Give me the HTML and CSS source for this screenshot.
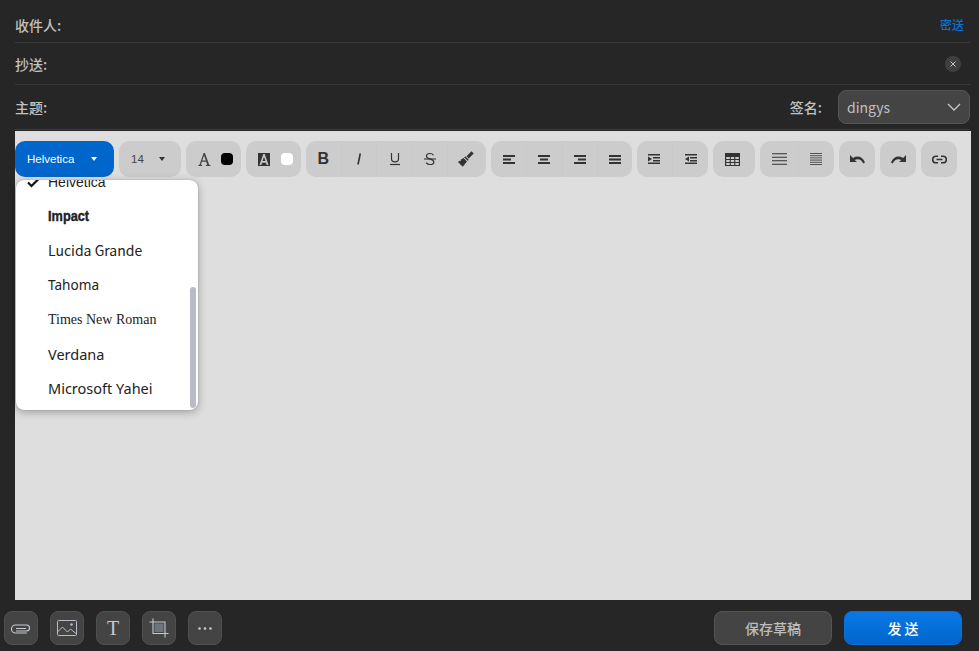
FILE: index.html
```html
<!DOCTYPE html>
<html lang="zh-CN">
<head>
<meta charset="utf-8">
<title>写邮件</title>
<link rel="stylesheet" href="styles.css">
</head>
<body>
<div class="app">
  <header class="fields">
    <div class="row r1"><span class="label">收件人:</span><a class="bcc">密送</a></div>
    <div class="row r2"><span class="label">抄送:</span>
      <span class="clear"><svg width="8" height="8" viewBox="0 0 8 8"><path d="M1.500 1.500l5 5M6.500 1.500l-5 5" stroke="#c4c4c4" stroke-width="1" fill="none"/></svg></span></div>
    <div class="row r3"><span class="label">主题:</span>
      <span class="sign"><span class="label">签名:</span>
        <span class="select">dingys<svg width="14" height="8" viewBox="0 0 14 8"><path d="M1 1l6 6 6-6" stroke="#c8c8c8" stroke-width="1.300" fill="none"/></svg></span></span></div>
  </header>

  <main class="editor">
    <div class="toolbar">
      <div class="group font active"><span class="fname">Helvetica</span><i class="caret"></i></div>
      <div class="group size"><span class="fsize">14</span><i class="caret"></i></div>
      <div class="group color">
        <svg class="a-icon" width="13" height="13" viewBox="0 0 13 13"><path fill="#444" fill-rule="evenodd" d="M5.600 0h1.300l4.300 11.800 1.300.4v.8H7.800v-.8l1.400-.4-1-3H3.900l-1 3 1.400.4v.8H.3v-.8l1.200-.4zM6 2.500L4.300 7.600h3.500z"/></svg><i class="swatch black"></i></div>
      <div class="group color">
        <svg class="a-icon" width="12" height="13" viewBox="0 0 12 13"><path fill="#333" d="M0 0h12v13H0z"/><path fill="#c9c9c9" d="M5.300 1h1.400l3.800 11H8.700L8 9.700H4l-.7 2.300H1.500zM6 3.800L4.600 8h2.800z" fill-rule="evenodd"/></svg><i class="swatch white"></i></div>
      <div class="group five">
        <span class="btn"><b class="t-b">B</b></span>
        <span class="btn"><svg width="14" height="14" viewBox="0 0 14 14"><path d="M8.300 1.500L6 12.500" stroke="#333" stroke-width="1.600"/></svg></span>
        <span class="btn"><svg width="14" height="14" viewBox="0 0 14 14"><path d="M3.500 1v5.700c0 2 1.400 3.100 3.500 3.100s3.500-1.100 3.500-3.100V1" stroke="#333" stroke-width="1.200" fill="none"/><path d="M2 12.500h10" stroke="#333" stroke-width="1.200"/></svg></span>
        <span class="btn"><svg width="14" height="14" viewBox="0 0 14 14"><path d="M10.500 3.200C9.800 2 8.500 1.500 7 1.500c-2 0-3.500 1-3.500 2.700 0 3.800 7.300 1.900 7.300 5.700 0 1.700-1.600 2.600-3.800 2.600-1.700 0-3-.6-3.700-1.900" stroke="#333" stroke-width="1.200" fill="none"/><path d="M1 7h12" stroke="#333" stroke-width="1.100"/></svg></span>
        <span class="btn"><svg width="16" height="16" viewBox="0 0 16 16"><path d="M13.500.3l2.200 2.200-5 5-2.200-2.200z" fill="#333"/><path d="M7.300 5.300l3.400 3.400-1 1.100L6.200 6.400zM5.500 7l3.500 3.500L4.700 15.700 0 11l1.600-1.300 1.300.3-.2-1.200z" fill="#333"/></svg></span>
      </div>
      <div class="group align">
        <span class="btn"><svg class="ic" viewBox="0 0 12 9"><path d="M0 1h12M0 4.500h8M0 8h12"/></svg></span>
        <span class="btn"><svg class="ic" viewBox="0 0 12 9"><path d="M0 1h12M2 4.500h8M0 8h12"/></svg></span>
        <span class="btn"><svg class="ic" viewBox="0 0 12 9"><path d="M0 1h12M4 4.500h8M0 8h12"/></svg></span>
        <span class="btn"><svg class="ic" viewBox="0 0 12 9"><path d="M0 1h12M0 4.500h12M0 8h12"/></svg></span>
      </div>
      <div class="group indent">
        <span class="btn"><svg class="ic2" viewBox="0 0 13 10"><path d="M0 .7h12M5 3.800h7M5 6.700h7M0 9.300h12"/><path class="fill" d="M0 2.600l4 2.500-4 2.500z"/></svg></span>
        <span class="btn"><svg class="ic2" viewBox="0 0 13 10"><path d="M1 .7h12M6 3.800h7M6 6.700h7M1 9.300h12"/><path class="fill" d="M5 2.600L1 5.100l4 2.500z"/></svg></span>
      </div>
      <div class="group table"><svg width="15" height="13" viewBox="0 0 15 13"><path fill="#333" d="M0 0h15v13H0zM1.200 4v2h3.500V4zm4.600 0v2h3.400V4zm4.500 0v2h3.500V4zM1.200 7v2h3.500V7zm4.600 0v2h3.400V7zm4.500 0v2h3.500V7zM1.200 10v2h3.500v-2zm4.600 0v2h3.400v-2zm4.500 0v2h3.500v-2z" fill-rule="evenodd"/></svg></div>
      <div class="group list">
        <span class="btn"><svg width="15" height="12" viewBox="0 0 15 12"><path d="M0 .7h15M0 4.200h15M0 7.700h15M0 11.200h15" stroke="#333" stroke-width="1.100"/></svg></span>
        <span class="btn"><svg width="12" height="12" viewBox="0 0 12 12"><path d="M0 .5h12M0 2.700h12M0 4.900h12M0 7.100h12M0 9.300h12M0 11.500h12" stroke="#444" stroke-width=".9"/></svg></span>
      </div>
      <div class="group solo"><svg width="15" height="9" viewBox="0 0 15 9"><path fill="#333" d="M0 0v7h7L4.600 5C7.800 3.300 11.500 4.200 13.300 8.500L15 7.500C12.500 1.500 7.500.2 3 3z"/></svg></div>
      <div class="group solo"><svg width="15" height="9" viewBox="0 0 15 9"><path fill="#333" d="M15 0v7H8l2.400-2C7.200 3.300 3.500 4.200 1.700 8.500L0 7.500C2.500 1.500 7.500.2 12 3z"/></svg></div>
      <div class="group solo"><svg width="15" height="9" viewBox="0 0 15 9"><path d="M6 1.200H4a3.300 3.300 0 0 0 0 6.600h2M9 1.200h2a3.300 3.300 0 0 1 0 6.600H9M4.500 4.500h6" stroke="#333" stroke-width="1.600" fill="none"/></svg></div>
    </div>

    <div class="menu">
      <ul class="options">
        <li class="selected"><svg class="check" width="13" height="11" viewBox="0 0 13 11"><path d="M1 5.500l3.500 3.500L12 1.500" stroke="#111" stroke-width="2.200" fill="none"/></svg>Helvetica</li>
        <li class="f-impact">Impact</li>
        <li>Lucida Grande</li>
        <li class="f-noto f-small">Tahoma</li>
        <li class="f-times">Times New Roman</li>
        <li class="f-noto">Verdana</li>
        <li class="f-noto">Microsoft Yahei</li>
      </ul>
      <span class="thumb"></span>
    </div>
  </main>

  <footer class="actions">
    <div class="tools">
      <span class="tool"><svg width="20" height="11" viewBox="0 0 20 11"><path d="M5 8h10.500a3 3 0 0 0 0-6H4.500a3.800 3.800 0 0 0 0 8h11.300M5 5.500h10" stroke="#c6cad2" stroke-width="1.100" fill="none"/></svg></span>
      <span class="tool"><svg width="20" height="16" viewBox="0 0 20 16"><rect x=".5" y=".5" width="19" height="15" rx="1" stroke="#b8bcc4" fill="none"/><path d="M.5 12l5-5 5 5 3-3 6 5" stroke="#b8bcc4" fill="none"/><circle cx="14.500" cy="4.500" r="1.300" fill="#b8bcc4"/></svg></span>
      <span class="tool tool-t">T</span>
      <span class="tool"><svg width="20" height="20" viewBox="0 0 20 20"><path d="M4 .5V15.500h15.500M.5 4H16v15.500" stroke="#c6cad2" stroke-width="1.100" fill="none"/><rect x="5.500" y="5.500" width="9" height="8.500" fill="#6f737a"/></svg></span>
      <span class="tool"><svg width="14" height="3" viewBox="0 0 14 3"><circle cx="1.500" cy="1.500" r="1.300" fill="#c6cad2"/><circle cx="7" cy="1.500" r="1.300" fill="#c6cad2"/><circle cx="12.500" cy="1.500" r="1.300" fill="#c6cad2"/></svg></span>
    </div>
    <div class="send-wrap">
      <button class="draft">保存草稿</button>
      <button class="send">发 送</button>
    </div>
  </footer>
</div>
</body>
</html>
```

FILE: styles.css
```css
* { box-sizing: border-box; }
html, body { margin: 0; height: 100%; }
body { background: #262626; font-family: "Noto Sans CJK SC", "Noto Sans", sans-serif; overflow: hidden; }
.app { width: 979px; height: 651px; display: flex; flex-direction: column; }

.fields { padding: 0 9px 0 15px; }
.row { display: flex; align-items: center; justify-content: space-between; border-bottom: 1px solid #3a3a3a; }
.r1 { height: 43px; padding-top: 7px; }
.r2 { height: 42px; }
.r3 { height: 45px; }
.label { color: #c0c0c0; font-size: 14px; font-weight: 500; line-height: 20px; }
.bcc { color: #0a6fd6; font-size: 12px; font-weight: 500; padding-right: 6px; }
.clear { width: 16px; height: 16px; border-radius: 50%; background: #3f3f3f; display: flex; align-items: center; justify-content: center; margin-right: 9px; }
.sign { display: flex; align-items: center; gap: 16px; }
.select { width: 132px; height: 34px; border: 1px solid #555; background: #444; border-radius: 8px; color: #c0c0c0; font-size: 14px; display: flex; align-items: center; justify-content: space-between; padding: 0 8px; }

.editor { position: relative; margin: 1px 8px 0 15px; height: 469px; background: #dedede; padding-top: 10px; flex: none; }
.toolbar { display: flex; gap: 5px; height: 36px; }
.group { display: flex; align-items: center; justify-content: center; background: #ccc; border-radius: 10px; height: 36px; }
.group.five { width: 180px; padding-right: 3px; }
.group.align { width: 141px; padding-left: 1px; }
.group.indent { width: 71px; }
.group.table { width: 42px; padding-right: 3px; }
.group.list { width: 74px; }
.list .btn:first-child { padding-left: 2px; }
.group.solo { width: 36px; }
.btn { flex: 1; height: 100%; display: flex; align-items: center; justify-content: center; }
.btn + .btn { border-left: 1px solid #c9c9c9; }
.font { width: 99px; background: #0066cc; justify-content: flex-start; padding-left: 12px; }
.fname { color: #fff; font: 11.500px "Liberation Sans", sans-serif; width: 64px; }
.font .caret { border-top-color: #fff; }
.size { width: 62px; justify-content: flex-start; padding-left: 12px; }
.fsize { color: #444; font: 11.500px "Liberation Sans", sans-serif; width: 28px; }
.caret { width: 0; height: 0; border: 3.500px solid transparent; border-top: 4px solid #333; border-bottom: 0; display: block; }
.color { width: 55px; justify-content: flex-start; padding-left: 12px; gap: 10px; }
.color + .color { gap: 11px; }
.swatch { width: 12px; height: 12px; border-radius: 4px; display: block; }
.black { background: #000; }
.white { background: #fff; }
.t-b { font: bold 16px "Liberation Sans", sans-serif; color: #333; }
.ic { width: 12px; height: 9px; stroke: #333; stroke-width: 2; fill: none; }
.ic2 { width: 13px; height: 10px; stroke: #333; stroke-width: 1.500; fill: none; }
.ic2 .fill { fill: #333; stroke: none; }

.menu { position: absolute; left: 1px; top: 49px; width: 182px; height: 230px; background: #fff; border-radius: 8px; box-shadow: 0 0 1px #777, 0 2px 8px rgba(0, 0, 0, .3); overflow: hidden; }
.options { list-style: none; margin: -16px 0 0; padding: 0; }
.options li { height: 34.400px; line-height: 34.400px; padding-left: 32px; color: #222; font-size: 14px; position: relative; }
.selected { font-family: "Liberation Sans", sans-serif; }
.options .selected { top: 1px; }
.check { position: absolute; left: 11px; top: 12px; }
.options .f-impact { top: 1px; font: bold 15px/34.400px "Liberation Sans", sans-serif; -webkit-text-stroke: .4px #222; transform: scaleX(.85); transform-origin: 32px center; }
.options .f-times { top: 1px; font: 14px/34.400px "Liberation Serif", serif; }
.options .f-noto { top: 1px; font-family: "Noto Sans", sans-serif; font-size: 14.500px; }
.options .f-small { font-size: 13.600px; }
.thumb { position: absolute; left: 174px; top: 107px; width: 6px; height: 121px; border-radius: 3px; background: #b9bcc4; }

.actions { flex: 1; display: flex; align-items: center; justify-content: space-between; padding: 5px 17px 0 4px; }
.tools { display: flex; gap: 12px; }
.tool { width: 34px; height: 34px; background: #444; border: 1px solid #505050; border-radius: 8px; display: flex; align-items: center; justify-content: center; }
.tool-t { font: 20px "Liberation Serif", serif; color: #c6cad2; }
.send-wrap { display: flex; gap: 12px; }
.draft, .send { width: 118px; height: 34px; border-radius: 8px; font: 500 14px "Noto Sans CJK SC", sans-serif; padding: 0; }
.draft { background: #444; border: 1px solid #555; color: #bdbdbd; }
.send { background: linear-gradient(#0a78e6, #0066cc); border: 1px solid #0a6fd6; color: #fff; }
```
